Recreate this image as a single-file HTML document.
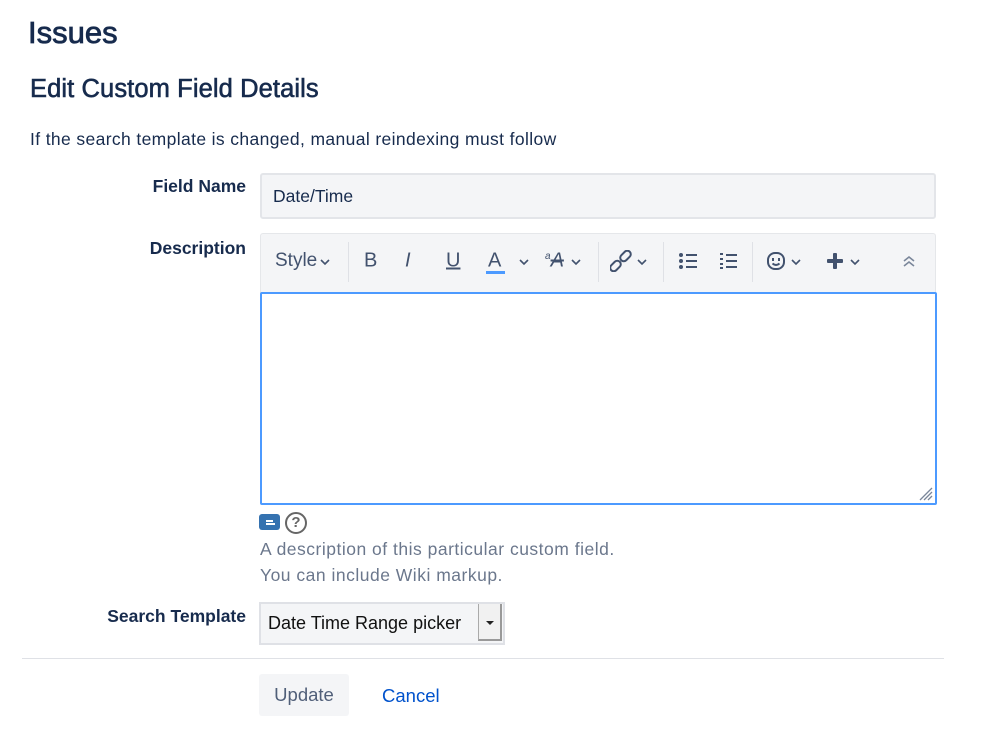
<!DOCTYPE html>
<html><head><style>
body{margin:0;width:999px;height:741px;background:#fff;font-family:"Liberation Sans",sans-serif;color:#172b4d;position:relative;overflow:hidden}
.a{position:absolute;white-space:nowrap}
.lbl{position:absolute;right:753px;font-weight:bold;font-size:17.5px;color:#172b4d}
.tb{position:absolute;top:261px;transform:translateY(-50%);color:#42526e;font-size:20px}
.sep{position:absolute;top:242px;width:1px;height:40px;background:#dfe1e6}
.ch{position:absolute;top:258px}
</style></head><body>
<div class="a" style="left:28px;top:15px;font-size:31px;color:#172b4d;-webkit-text-stroke:0.8px #172b4d">Issues</div>
<div class="a" style="left:30px;top:75px;font-size:25.5px;letter-spacing:0.1px;color:#172b4d;-webkit-text-stroke:0.6px #172b4d">Edit Custom Field Details</div>
<div class="a" style="left:30px;top:129px;font-size:17.5px;letter-spacing:0.37px;color:#172b4d">If the search template is changed, manual reindexing must follow</div>

<div class="lbl" style="top:176px">Field Name</div>
<div class="a" style="left:260px;top:173px;width:676px;height:46px;background:#f4f5f7;border:2px solid #e3e5e9;border-radius:3px;box-sizing:border-box"></div>
<div class="a" style="left:273px;top:186px;font-size:17.5px;color:#172b4d">Date/Time</div>

<div class="lbl" style="top:238px">Description</div>
<div class="a" style="left:260px;top:233px;width:676px;height:60px;background:#f4f5f7;border:1px solid #e5e7ea;box-sizing:border-box;border-radius:3px 3px 0 0"></div>
<div class="tb" style="left:275px;font-size:19px">Style</div>
<svg class="ch" style="left:320px" width="10" height="8" fill="none" stroke="#42526e" stroke-width="1.6"><path d="M1 2l4 4 4-4"/></svg>
<div class="sep" style="left:348px"></div>
<div class="tb" style="left:364px">B</div>
<div class="tb" style="left:405px;font-style:italic">I</div>
<div class="tb" style="left:446px;text-decoration:underline">U</div>
<div class="tb" style="left:488px">A</div>
<div class="a" style="left:486px;top:271px;width:19px;height:3px;background:#4c9aff"></div>
<svg class="ch" style="left:519px" width="10" height="8" fill="none" stroke="#42526e" stroke-width="1.6"><path d="M1 2l4 4 4-4"/></svg>
<div class="tb" style="left:545px;font-style:italic"><sup style="font-size:10px">a</sup><s>A</s></div>
<svg class="ch" style="left:571px" width="10" height="8" fill="none" stroke="#42526e" stroke-width="1.6"><path d="M1 2l4 4 4-4"/></svg>
<div class="sep" style="left:598px"></div>
<svg class="a" style="left:610px;top:250px" width="22" height="22" viewBox="0 0 22 22" fill="none" stroke="#42526e" stroke-width="2"><rect x="2" y="10" width="7" height="12" rx="3.5" transform="rotate(45 5.5 16)"/><rect x="12" y="0" width="7" height="12" rx="3.5" transform="rotate(45 15.5 6)"/></svg>
<svg class="ch" style="left:637px" width="10" height="8" fill="none" stroke="#42526e" stroke-width="1.6"><path d="M1 2l4 4 4-4"/></svg>
<div class="sep" style="left:663px"></div>
<svg class="a" style="left:678px;top:252px" width="20" height="18" fill="#42526e"><circle cx="3" cy="3" r="2"/><circle cx="3" cy="9" r="2"/><circle cx="3" cy="15" r="2"/><rect x="8" y="2" width="11" height="2"/><rect x="8" y="8" width="11" height="2"/><rect x="8" y="14" width="11" height="2"/></svg>
<svg class="a" style="left:719px;top:252px" width="20" height="18" fill="#42526e"><rect x="1" y="1" width="3" height="2"/><rect x="1" y="6" width="3" height="2"/><rect x="1" y="11" width="3" height="2"/><rect x="1" y="15" width="3" height="2"/><rect x="7" y="2" width="11" height="2"/><rect x="7" y="8" width="11" height="2"/><rect x="7" y="14" width="11" height="2"/></svg>
<div class="sep" style="left:752px"></div>
<svg class="a" style="left:766px;top:251px" width="20" height="20" fill="none" stroke="#42526e" stroke-width="2"><rect x="2" y="2" width="16" height="16" rx="7"/><path d="M7 7v3M13 7v3M6.5 12.5q3.5 3 7 0"/></svg>
<svg class="ch" style="left:791px" width="10" height="8" fill="none" stroke="#42526e" stroke-width="1.6"><path d="M1 2l4 4 4-4"/></svg>
<svg class="a" style="left:827px;top:253px" width="16" height="16" fill="#42526e"><rect x="6" y="0" width="4" height="16" rx="1"/><rect x="0" y="6" width="16" height="4" rx="1"/></svg>
<svg class="ch" style="left:850px" width="10" height="8" fill="none" stroke="#42526e" stroke-width="1.6"><path d="M1 2l4 4 4-4"/></svg>
<svg class="a" style="left:902px;top:255px" width="14" height="12" fill="none" stroke="#7a869a" stroke-width="1.6"><path d="M2 6l5-4 5 4M2 11l5-4 5 4"/></svg>

<div class="a" style="left:260px;top:292px;width:677px;height:213px;border:2px solid #4c9aff;box-sizing:border-box;border-radius:2px;background:#fff"></div>
<svg class="a" style="left:917px;top:485px" width="16" height="16" stroke="#7a869a" stroke-width="1.3"><path d="M3 15L15 3M7 15L15 7M11 15L15 11"/></svg>

<div class="a" style="left:259px;top:514px;width:21px;height:16px;background:#3572b0;border-radius:3px"></div>
<div class="a" style="left:266px;top:520px;width:7px;height:1.5px;background:#fff"></div>
<div class="a" style="left:266px;top:523px;width:9px;height:1.5px;background:#fff"></div>
<div class="a" style="left:285px;top:512px;width:18px;height:18px;border:2px solid #666;border-radius:50%;font-size:15px;font-weight:bold;color:#666;text-align:center;line-height:18px">?</div>
<div class="a" style="left:260px;top:539px;font-size:17.5px;letter-spacing:0.5px;color:#6b778c">A description of this particular custom field.</div>
<div class="a" style="left:260px;top:565px;font-size:17.5px;letter-spacing:0.5px;color:#6b778c">You can include Wiki markup.</div>

<div class="lbl" style="top:606px">Search Template</div>
<div class="a" style="left:259px;top:602px;width:246px;height:43px;background:#f4f5f7;border:2px solid #dfe1e6;box-sizing:border-box"></div>
<div class="a" style="left:268px;top:613px;font-size:18px;color:#111">Date Time Range picker</div>
<div class="a" style="left:478px;top:604px;width:24px;height:37px;background:#f1f1f1;border-left:1px solid #aaa;border-right:2px solid #999;border-bottom:2px solid #999;box-sizing:border-box"></div>
<div class="a" style="left:486px;top:621px;border-left:4px solid transparent;border-right:4px solid transparent;border-top:4px solid #222"></div>

<div class="a" style="left:22px;top:658px;width:922px;height:1px;background:#dfe1e6"></div>
<div class="a" style="left:259px;top:674px;width:90px;height:42px;background:#f4f5f7;border-radius:3px;font-size:18.5px;color:#505f79;text-align:center;line-height:42px">Update</div>
<div class="a" style="left:382px;top:685px;font-size:18.5px;color:#0052cc">Cancel</div>
</body></html>
